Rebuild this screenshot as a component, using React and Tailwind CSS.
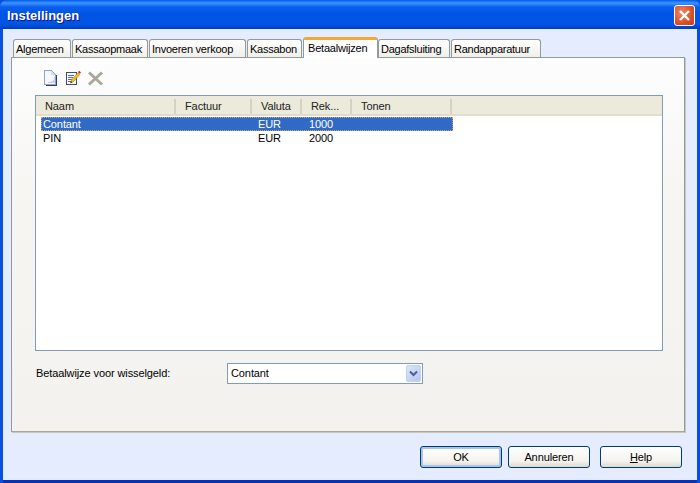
const tabs = [
  { label: 'Algemeen', width: 'w-[58px]' },
  { label: 'Kassaopmaak', width: 'w-[76px]' },
  { label: 'Invoeren verkoop', width: 'w-[97px]' },
  { label: 'Kassabon', width: 'w-[55px]' },
  { label: 'Betaalwijzen', width: 'w-[75px]', active: true },
  { label: 'Dagafsluiting', width: 'w-[72px]' },
  { label: 'Randapparatuur', width: 'w-[90px]' },
];

const columns = [
  { label: 'Naam', width: 'w-[140px]' },
  { label: 'Factuur', width: 'w-[76px]' },
  { label: 'Valuta', width: 'w-[50px]' },
  { label: 'Rek...', width: 'w-[50px]' },
  { label: 'Tonen', width: 'w-[100px]' },
];

const rows = [
  { naam: 'Contant', valuta: 'EUR', rek: '1000', selected: true },
  { naam: 'PIN', valuta: 'EUR', rek: '2000' },
];

function NewIcon() {
  return (
    <svg width="14" height="16" viewBox="0 0 14 16" shapeRendering="crispEdges">
      <path d="M1.5 .5h7l4 4v10h-11z" fill="#f6f8fd" stroke="#8ea4cc" />
      <path d="M8 1l4 4H8z" fill="#d5dcec" />
      <path d="M3 13h9V6l-2 5z" fill="#c9d1e6" />
      <path d="M12.5 4v11h-10v.5h11V5z" fill="#2c3f7c" />
    </svg>
  );
}

function EditIcon() {
  return (
    <svg width="16" height="16" viewBox="0 0 16 16">
      <path d="M1.5 2.500h10v12h-10z" fill="#f6f8fd" stroke="#3d4c80" shapeRendering="crispEdges" />
      <path d="M3 5h6M3 7h5M3 9h4M3 11h3" stroke="#5a6aa0" fill="none" shapeRendering="crispEdges" />
      <path d="M5.500 13l1-3 6.500-7.500 2 1.800-6.500 7.300z" fill="#f5c016" stroke="#a67a10" strokeWidth=".6" />
      <path d="M5.500 13l.6-1.800 1.300 1z" fill="#222" />
      <path d="M13 2l1.200-1.200 1.800 1.600-1.100 1.300z" fill="#d8233a" />
    </svg>
  );
}

function DeleteIcon() {
  return (
    <svg width="17" height="15" viewBox="0 0 17 15">
      <path d="M2 1.500l13 12M15 1.500l-13 12" stroke="#aca899" strokeWidth="3" fill="none" />
    </svg>
  );
}

function Button({ children, isDefault }) {
  return (
    <div className={`w-[82px] h-[22px] rounded-[3px] border border-[#003c74] bg-[linear-gradient(180deg,#ffffff_0%,#f4f3ee_70%,#dcd8cd_100%)] flex items-center justify-center ${isDefault ? 'shadow-[inset_0_0_0_2px_#a9c3ea]' : ''}`}>
      {children}
    </div>
  );
}

export default function App() {
  return (
    <div className="w-[700px] h-[483px] flex flex-col overflow-hidden bg-[#0a50e0] font-['Liberation_Sans',sans-serif] text-[11px] leading-[13px] tracking-[-0.1px] text-black">
      {/* Titelbalk */}
      <div className="h-[29px] shrink-0 pl-[7px] pr-[5px] flex items-center justify-between rounded-t-[7px] bg-[linear-gradient(180deg,#0058ee_0px,#3d95ff_3px,#0a5fee_7px,#0054e3_14px,#0055e5_24px,#0048d0_27px,#003cc0_29px)]">
        <span className="mt-[3px] text-white font-bold text-[13px] leading-[16px] tracking-normal [text-shadow:1px_1px_#0f1089]">Instellingen</span>
        <div className="mt-px w-[21px] h-[21px] rounded-[3px] border border-white bg-[radial-gradient(circle_at_35%_35%,#ec8a6a,#d9502a_60%,#c23a1a)] flex items-center justify-center">
          <svg width="13" height="13" viewBox="0 0 13 13">
            <path d="M2 2l9 9M11 2l-9 9" stroke="#fff" strokeWidth="2.400" />
          </svg>
        </div>
      </div>

      {/* Venster */}
      <div className="flex-1 mx-[3px] border-b-[3px] border-[#0831b8] bg-[#e5ecfd] px-[8px] pt-[7px]">
        <div className="flex items-end h-[21px] pl-[2px] relative z-10">
          {tabs.map((tab) => (
            <div
              key={tab.label}
              className={tab.active
                ? `${tab.width} h-[21px] shrink-0 -mb-px rounded-t-[3px] border-x border-[#919b9c] border-t-[3px] border-t-[#f0a83a] bg-white pl-[4px] pt-[2px] tracking-[-0.2px] text-black whitespace-nowrap`
                : `${tab.width} h-[18px] shrink-0 rounded-t-[3px] border-x border-t border-[#919b9c] bg-[linear-gradient(180deg,#ffffff,#f0efe8)] pl-[2px] pt-[3px] tracking-[-0.25px] whitespace-nowrap mr-px`}
            >
              {tab.label}
            </div>
          ))}
        </div>

        {/* Tabblad */}
        <div className="w-[674px] h-[375px] border border-[#919b9c] border-b-[#aca899] shadow-[1px_1px_0_#c9c6ba] bg-[linear-gradient(180deg,#fdfdfe_0%,#f6f5f1_40%,#f3f2ee_100%)] pl-[23px] pt-[11px]">
          <div className="flex items-center h-[18px] pl-[8px]">
            <NewIcon />
            <div className="ml-[8px]"><EditIcon /></div>
            <div className="ml-[6px]"><DeleteIcon /></div>
          </div>

          <div className="mt-[8px] w-[628px] h-[256px] border border-[#7f9db9] bg-white">
            <div className="h-[20px] flex bg-[#ebeadb] border-b-2 border-[#e2decd]">
              {columns.map((col) => (
                <div key={col.label} className={`${col.width} h-[15px] mt-[3px] pl-[9px] pt-px border-r-2 border-[#d6d2c2] text-[#222] whitespace-nowrap`}>
                  {col.label}
                </div>
              ))}
            </div>
            <div className="pl-[5px] pt-px">
              {rows.map((row) => (
                <div
                  key={row.naam}
                  className={`w-[412px] h-[14px] flex items-center whitespace-nowrap ${row.selected ? 'bg-[#316ac5] text-white outline-1 -outline-offset-1 outline-dotted outline-[#c9a868]' : ''}`}
                >
                  <span className="w-[217px] pl-[2px]">{row.naam}</span>
                  <span className="w-[51px]">{row.valuta}</span>
                  <span>{row.rek}</span>
                </div>
              ))}
            </div>
          </div>

          <div className="mt-[12px] flex items-center">
            <span className="w-[192px] pl-px">Betaalwijze voor wisselgeld:</span>
            <div className="w-[196px] h-[21px] border border-[#7f9db9] bg-white flex items-center justify-between pl-[3px] pr-px">
              <span>Contant</span>
              <div className="w-[15px] h-[17px] rounded-[2px] bg-[linear-gradient(135deg,#dbe5fb,#b4c7f4)] border border-[#c3d0f2] flex items-center justify-center">
                <svg width="9" height="7" viewBox="0 0 9 7">
                  <path d="M1 1.500l3.500 3.500L8 1.500" stroke="#4d6185" strokeWidth="2" fill="none" />
                </svg>
              </div>
            </div>
          </div>
        </div>

        {/* Knoppen */}
        <div className="mt-[14px] flex justify-end pr-[7px]">
          <Button isDefault>OK</Button>
          <div className="ml-[6px]"><Button>Annuleren</Button></div>
          <div className="ml-[10px]"><Button><span><span className="underline">H</span>elp</span></Button></div>
        </div>
      </div>
    </div>
  );
}
